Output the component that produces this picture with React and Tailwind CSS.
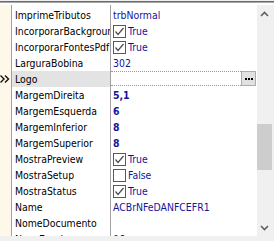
import React from 'react'

const rows = [
  { name: 'ImprimeTributos', value: 'trbNormal' },
  { name: 'IncorporarBackgroundPdf', check: true, value: 'True' },
  { name: 'IncorporarFontesPdf', check: true, value: 'True' },
  { name: 'LarguraBobina', value: '302' },
  { name: 'Logo', value: '', selected: true },
  { name: 'MargemDireita', value: '5,1', bold: true },
  { name: 'MargemEsquerda', value: '6', bold: true },
  { name: 'MargemInferior', value: '8', bold: true },
  { name: 'MargemSuperior', value: '8', bold: true },
  { name: 'MostraPreview', check: true, value: 'True' },
  { name: 'MostraSetup', check: false, value: 'False' },
  { name: 'MostraStatus', check: true, value: 'True' },
  { name: 'Name', value: 'ACBrNFeDANFCEFR1' },
  { name: 'NomeDocumento', value: '' },
  { name: 'NovaEscala', value: '96' },
]

function CheckBox({ checked }) {
  return (
    <svg width="13" height="13" viewBox="0 0 13 13" className="shrink-0">
      <rect x="0.5" y="0.5" width="12" height="12" fill="#fff" stroke="#5a5a5a" />
      {checked && (
        <polyline points="2.5,6.5 5,9.5 10.5,3" fill="none" stroke="#4a4a4a" strokeWidth="1.2" />
      )}
    </svg>
  )
}

function Row({ row }) {
  return (
    <div className="flex h-[16px] shrink-0">
      <div className="w-[12px] shrink-0 bg-[#fdf8ea] border-r border-[#a0a0a0] flex items-center">
        {row.selected && (
          <svg width="10" height="8" viewBox="0 0 10 8">
            <polyline points="0.5,0.5 4,4 0.5,7.5" fill="none" stroke="#111" strokeWidth="1.4" />
            <polyline points="5,0.5 8.5,4 5,7.5" fill="none" stroke="#111" strokeWidth="1.4" />
          </svg>
        )}
      </div>
      <div
        className={`w-[99px] shrink-0 border-r border-[#a0a0a0] pl-[3px] overflow-hidden whitespace-nowrap leading-[16px] text-black ${
          row.selected ? 'bg-[#e3e3e3]' : ''
        }`}
      >
        {row.name}
      </div>
      <div className="flex-1 min-w-0">
        {row.selected ? (
          <div className="flex h-[15px]">
            <div className="flex-1 border-y border-dotted border-[#9a9a9a]" />
            <div className="w-[15px] h-[15px] mr-[1px] bg-[#e1e1e1] border border-[#adadad] flex items-center justify-center gap-[1px]">
              <span className="w-[2px] h-[2px] bg-black" />
              <span className="w-[2px] h-[2px] bg-black" />
              <span className="w-[2px] h-[2px] bg-black" />
            </div>
          </div>
        ) : (
          <div
            className={`flex items-center h-[16px] pl-[2px] gap-[2px] whitespace-nowrap text-[#14149a] ${
              row.bold ? 'font-bold' : ''
            }`}
          >
            {row.check !== undefined && <CheckBox checked={row.check} />}
            <span className="leading-[16px]">{row.value}</span>
          </div>
        )}
      </div>
    </div>
  )
}

export default function App() {
  return (
    <div className="w-[274px] h-[241px] overflow-hidden bg-white flex flex-col text-[10.4px] font-['DejaVu_Sans_Condensed','DejaVu_Sans',sans-serif]">
      {/* top edge */}
      <div className="h-[5px] shrink-0 flex flex-col">
        <div className="h-[1px] bg-[#f0f0f0]" />
        <div className="h-[1px] bg-[#6b6b6b]" />
        <div className="h-[1px] bg-[#a8a8a8]" />
        <div className="h-[2px] bg-white" />
      </div>
      <div className="flex flex-1 min-h-0">
        <div className="w-[257px] shrink-0 flex flex-col overflow-hidden">
          <div className="flex h-[2px] shrink-0">
            <div className="w-[12px] bg-[#fdf8ea] border-r border-[#a0a0a0]" />
            <div className="w-[99px] border-r border-[#a0a0a0]" />
          </div>
          {rows.map((row) => (
            <Row key={row.name} row={row} />
          ))}
        </div>
        {/* scrollbar */}
        <div className="flex-1 bg-[#f0f0f0] flex flex-col">
          <div className="h-[17px] flex items-center justify-center pr-[2px]">
            <svg width="9" height="6" viewBox="0 0 9 6">
              <polyline points="1,5 4.5,1.5 8,5" fill="none" stroke="#606060" strokeWidth="1.6" />
            </svg>
          </div>
          <div className="h-[102px]" />
          <div className="h-[46px] w-[15px] bg-[#cdcdcd]" />
          <div className="flex-1" />
          <div className="h-[17px] flex items-center justify-center pr-[2px]">
            <svg width="9" height="6" viewBox="0 0 9 6">
              <polyline points="1,1 4.5,4.5 8,1" fill="none" stroke="#606060" strokeWidth="1.6" />
            </svg>
          </div>
        </div>
      </div>
      <div className="h-[5px] shrink-0 bg-[#f0f0f0]" />
    </div>
  )
}
